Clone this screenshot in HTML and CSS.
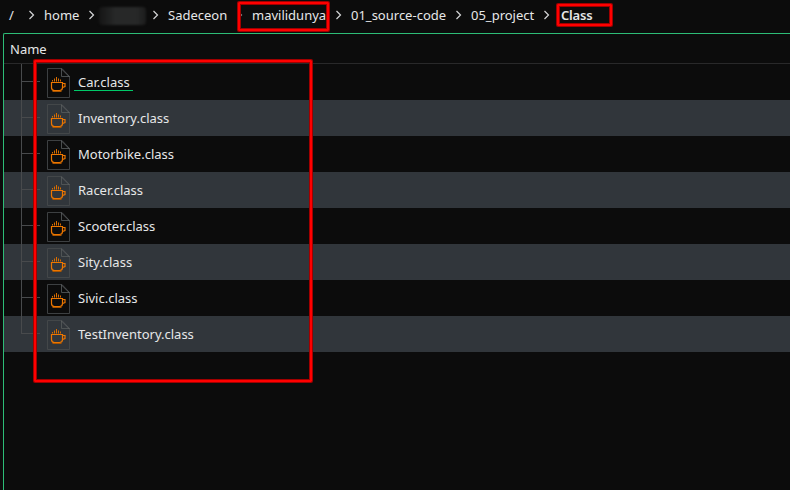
FILE: index.html
```html
<!DOCTYPE html>
<html lang="en">
<head>
<meta charset="utf-8">
<title>Class</title>
<link rel="stylesheet" href="styles.css">
</head>
<body>
<svg class="defs" width="0" height="0">
  <symbol id="chevron" viewBox="0 0 7 10"><path d="M1.500 1 5.500 5 1.500 9" fill="none" stroke="#d5d6d7" stroke-width="1.2"/></symbol>
  <symbol id="java" viewBox="0 0 24 31">
    <path d="M.5.5H15L22.500 8.500V29.500H.5Z" fill="none" stroke="#464a4c" stroke-opacity=".85"/>
    <path d="M14.500 .5V8.500H22.500" fill="none" stroke="#55595b" stroke-opacity=".85"/>
    <path d="M14.500 1 22.500 9" fill="none" stroke="#66696b" stroke-width=".7"/>
    <g fill="none" stroke="#ec7600" stroke-width="1.2">
      <path d="M4.500 14.500H15.500V19.500Q15.500 22.500 12.500 22.500H7.500Q4.500 22.500 4.500 19.500Z"/>
      <path d="M15.500 15.500H18V18.500L15.500 19.500"/>
      <path d="M5.500 23.500H14.500" stroke="#a95500" stroke-width="1"/>
      <path d="M5.500 13.500V12M7.500 13.500V10.500M9.500 13.500V9M11.500 13.500V10.500M13.500 13.500V11.500" stroke-width="1" stroke="#d86d00"/>
    </g>
  </symbol>
</svg>
<div class="window">
  <nav class="path">
    <span>/</span><svg><use href="#chevron"/></svg>
    <span>home</span><svg><use href="#chevron"/></svg>
    <span class="hidden-name"></span><svg><use href="#chevron"/></svg>
    <span>Sadeceon</span><svg class="dim"><use href="#chevron"/></svg>
    <span>mavilidunya</span><svg><use href="#chevron"/></svg>
    <span>01_source-code</span><svg><use href="#chevron"/></svg>
    <span>05_project</span><svg><use href="#chevron"/></svg>
    <span class="current">Class</span>
  </nav>
  <main class="view">
    <header class="heading">Name</header>
    <ul class="files">
      <li><i class="branch"></i><svg><use href="#java"/></svg><span class="marked">Car.class</span></li>
      <li><i class="branch"></i><svg><use href="#java"/></svg><span>Inventory.class</span></li>
      <li><i class="branch"></i><svg><use href="#java"/></svg><span>Motorbike.class</span></li>
      <li><i class="branch"></i><svg><use href="#java"/></svg><span>Racer.class</span></li>
      <li><i class="branch"></i><svg><use href="#java"/></svg><span>Scooter.class</span></li>
      <li><i class="branch"></i><svg><use href="#java"/></svg><span>Sity.class</span></li>
      <li><i class="branch"></i><svg><use href="#java"/></svg><span>Sivic.class</span></li>
      <li><i class="branch"></i><svg><use href="#java"/></svg><span>TestInventory.class</span></li>
    </ul>
  </main>
  <div class="mark mark-user"></div>
  <div class="mark mark-class"></div>
  <div class="mark mark-files"></div>
</div>
</body>
</html>
```
FILE: styles.css
```css
* { box-sizing: border-box; }
body {
  margin: 0;
  background: #0c0c0c;
  color: #e6e7e8;
  font: 13px/18px "Noto Sans", sans-serif;
}
.defs { position: absolute; }
.window { position: relative; height: 490px; overflow: hidden; display: flex; flex-direction: column; }
.path {
  height: 33px;
  flex: none;
  display: grid;
  grid-template-columns: 19px 16px 44px 11px 53px 16px 68px 16px 83px 16px 104px 16px 72px 18px 60px;
  padding: 6px 0 0 9px;
  white-space: nowrap;
}
.path svg { width: 7px; height: 10px; margin-top: 4px; }
.path .dim { opacity: .6; }
.path .current { font-weight: 600; letter-spacing: -.2px; }
.hidden-name {
  height: 18px;
  margin: 1px 6px 0 0;
  border-radius: 3px;
  background: linear-gradient(90deg, #151515, #272828 35%, #272828 80%, #1c1c1c);
  filter: blur(1px);
}
.view { flex: 1; margin-left: 3px; border: solid #2dbd77; border-width: 1px 0 0 1px; border-top-left-radius: 2px; }
.heading { height: 30px; padding: 6px 6px 0; border-bottom: 1px solid #29292a; }
.files { list-style: none; margin: 0; padding: 0; }
.files li { height: 36px; display: flex; align-items: flex-start; }
.files li:nth-child(even) { background: #31363b; }
.branch {
  width: 19px;
  height: 36px;
  margin: 0 7px 0 17px;
  background:
    linear-gradient(#484a4c, #484a4c) 0 0 / 1px 100% no-repeat,
    linear-gradient(#484a4c, #484a4c) 0 17px / 100% 1px no-repeat;
}
.files li:last-child .branch { background-size: 1px 18px, 100% 1px; }
.files li svg { width: 24px; height: 31px; margin-top: 4px; }
.files li span { margin: 9px 0 0 4px; padding: 0 3px; }
.files li .marked { width: 59px; height: 18px; border-bottom: 1px solid #00c968; margin-left: 3px; padding-left: 4px; }
.mark {
  position: absolute;
  border: 2px solid #f00;
  border-radius: 1px;
  box-shadow: 0 0 0 1px #a00000, inset 0 0 0 1px #a00000;
}
.mark-user { left: 238px; top: 2px; width: 91px; height: 29px; }
.mark-class { left: 557px; top: 4px; width: 55px; height: 22px; }
.mark-files { left: 34px; top: 60px; width: 278px; height: 322px; }
```
